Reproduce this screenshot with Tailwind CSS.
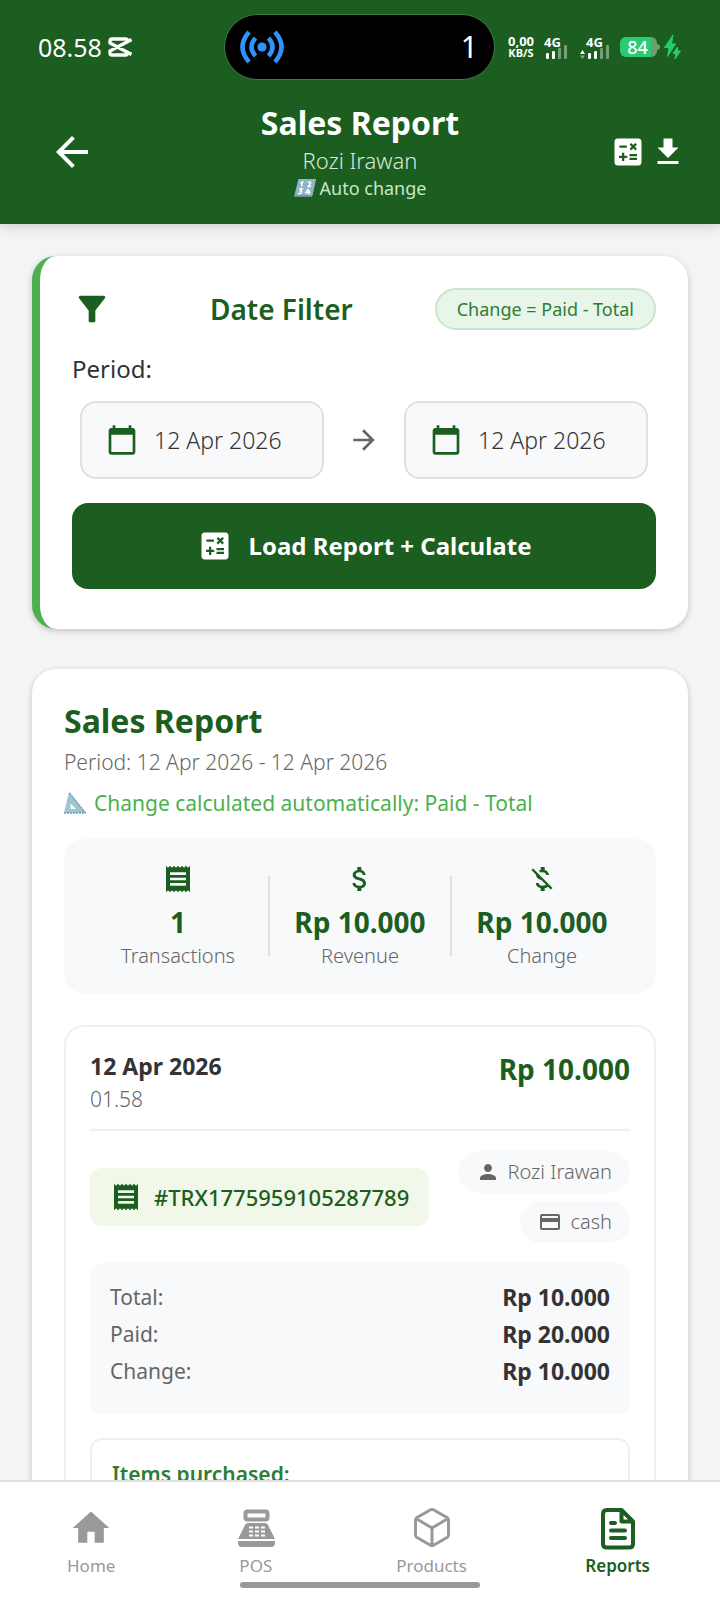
<!DOCTYPE html>
<html lang="en">
<head>
<meta charset="utf-8">
<meta name="viewport" content="width=device-width, initial-scale=1">
<title>Sales Report</title>
<script src="https://cdn.jsdelivr.net/npm/@tailwindcss/browser@4"></script>
</head>
<body class="flex h-screen flex-col overflow-hidden bg-[#f4f4f4] font-['Noto_Sans',sans-serif] text-[#333333]">

<svg class="hidden" aria-hidden="true">
  <symbol id="calc" viewBox="0 0 24 24"><path fill="currentColor" d="M19 3H5c-1.1 0-2 .9-2 2v14c0 1.1.9 2 2 2h14c1.1 0 2-.9 2-2V5c0-1.1-.9-2-2-2zm-5.97 4.06 1.06-1.06 1.41 1.41L16.91 6l1.06 1.06-1.41 1.41 1.41 1.41-1.06 1.06-1.41-1.41-1.41 1.41-1.06-1.06 1.41-1.41-1.41-1.41zM6.25 7.72h5v1.5h-5v-1.5zM11.5 16h-2v2H8v-2H6v-1.5h2v-2h1.5v2h2V16zm6.5 1.25h-5v-1.5h5v1.5zm0-2.5h-5v-1.5h5v1.5z"/></symbol>
  <symbol id="calendar" viewBox="0 0 24 24"><path fill="currentColor" d="M20 3h-1V1h-2v2H7V1H5v2H4c-1.1 0-2 .9-2 2v16c0 1.1.9 2 2 2h16c1.1 0 2-.9 2-2V5c0-1.1-.9-2-2-2zm0 18H4V8h16v13z"/></symbol>
  <symbol id="receipt" viewBox="0 0 24 24"><path fill="currentColor" d="M18 17H6v-2h12v2zm0-4H6v-2h12v2zm0-4H6V7h12v2zM3 22l1.5-1.5L6 22l1.5-1.5L9 22l1.5-1.5L12 22l1.5-1.5L15 22l1.5-1.5L18 22l1.5-1.5L21 22V2l-1.5 1.5L18 2l-1.5 1.5L15 2l-1.5 1.5L12 2l-1.5 1.5L9 2 7.500 3.5 6 2 4.500 3.5 3 2v20z"/></symbol>
</svg>

<header class="relative z-10 shrink-0 bg-[#1b5e20] text-white shadow-[0_2px_12px_rgba(0,0,0,0.18)]">
  <!-- Status bar -->
  <div class="flex h-[103px] items-start pr-[39px] pl-[38px]">
    <div class="flex h-[94px] flex-1 items-center gap-[6px]">
      <span class="text-[25px] leading-[34px]">08.58</span>
      <svg class="h-5 w-6" viewBox="0 0 24 20" fill="none" stroke="#fff" stroke-width="3.400" stroke-linejoin="round" aria-hidden="true"><path d="M23.500 2.500 2 14v2q0 2 2 2h13.500q2 0 2-2v-.5M23.500 17.500 2 6V4q0-2 2-2h13.500q2 0 2 2v.5"/></svg>
    </div>
    <div class="mt-[14px] flex h-[66px] w-[271px] items-center justify-between rounded-full border border-[#3c7b49] bg-black pr-4 pl-[14px]">
      <svg class="h-9 w-[46px]" viewBox="0 0 46 36" fill="none" stroke="#2f93ff" stroke-width="4.500" aria-hidden="true"><circle cx="23" cy="18" r="4.600" fill="#2f93ff" stroke="none"/><path d="M16.500 9Q8.500 18 16.500 27M29.500 9q8 9 0 18M10 3Q-3 18 10 33M36 3q13 15 0 30"/></svg>
      <span class="text-[30px] leading-10 font-normal">1</span>
    </div>
    <div class="flex h-[94px] flex-1 items-center justify-end">
      <div class="mr-[10px] text-center font-bold">
        <div class="text-[13px] leading-3">0,00</div>
        <div class="text-[11px] leading-3">KB/S</div>
      </div>
      <div class="mr-[12px] flex flex-col">
        <span class="text-[13px] leading-[12px] font-bold">4G</span>
        <svg class="-mt-[3px] ml-[2px] h-[14px] w-[22px]" viewBox="0 0 22 14" fill="#fff" aria-hidden="true"><rect y="8" width="3" height="6" rx="1"/><rect x="6" y="6" width="3" height="8" rx="1"/><g opacity=".4"><rect x="12" y="3" width="3" height="11" rx="1"/><rect x="18" width="3" height="14" rx="1"/></g></svg>
      </div>
      <div class="mr-[10px] flex flex-col">
        <span class="ml-[6px] text-[13px] leading-[12px] font-bold">4G</span>
        <svg class="-mt-[3px] h-[14px] w-[30px]" viewBox="0 0 30 14" fill="#fff" aria-hidden="true"><path d="M0 9h5L2.500 5z"/><path d="M0 10.500h5L2.500 14z" opacity=".5"/><rect x="8" y="8" width="3" height="6" rx="1"/><rect x="14" y="6" width="3" height="8" rx="1"/><g opacity=".4"><rect x="20" y="3" width="3" height="11" rx="1"/><rect x="26" width="3" height="14" rx="1"/></g></svg>
      </div>
      <div class="flex h-5 w-[37px] items-center justify-center rounded-[6px] bg-linear-to-r from-[#2acb72] from-84% to-[#6f9c72] to-84% pr-[2px] text-[18px] leading-5 font-medium">84</div>
      <div class="mr-1 h-[6px] w-[3px] rounded-r-full bg-[#6f9c72]"></div>
      <svg class="h-[26px] w-[17px]" viewBox="0 0 17 26" fill="#26cb70" stroke="#26cb70" stroke-linejoin="round" aria-hidden="true"><path d="M9 1 .5 13.500H5L3.500 22.500 11.500 10H7.500z"/><path d="M13.500 13 9 19.500h3l-1 5.500 5.500-8h-3z"/></svg>
    </div>
  </div>
  <!-- App bar -->
  <div class="grid grid-cols-[1fr_auto_1fr] items-center pr-[34px] pb-[23px] pl-12">
    <button type="button" aria-label="Back" class="size-12 cursor-pointer">
      <svg class="size-12" viewBox="0 0 24 24" fill="currentColor"><path d="M20 11H7.830l5.590-5.590L12 4l-8 8 8 8 1.410-1.410L7.830 13H20v-2z"/></svg>
    </button>
    <div class="-ml-[14px] flex flex-col items-center">
      <h1 class="text-[32px] leading-10 font-bold">Sales Report</h1>
      <p class="mt-[2px] text-[22px] leading-[30px] font-light text-[#d9e6da]">Rozi Irawan</p>
      <p class="flex items-center gap-1 text-[18px] leading-[26px] text-[#c8e6c9]">
        <svg class="h-[18px] w-[22px]" viewBox="0 0 22 18" aria-hidden="true"><path d="M4.500 0H22l-4 18H0z" fill="#5d8da5"/><path d="M4.500 0H22l-3.500 16.500H.5z" fill="#8fb4c6"/><path d="M6.500 4 8.500 3 7.500 7.500M14 3.500q3-1 2.500 1t-3 3h3.500M5 10h3l-1.500 2q2 .5 0 2.500H4M14.500 10 12 13.500h4.500M15.500 11l-1 4.500" fill="none" stroke="#fff" stroke-width="1.500"/></svg>
        Auto change
      </p>
    </div>
    <div class="flex justify-end gap-1">
      <button type="button" aria-label="Calculate" class="cursor-pointer"><svg class="size-9"><use href="#calc"/></svg></button>
      <button type="button" aria-label="Download" class="cursor-pointer"><svg class="size-9" viewBox="0 0 24 24" fill="currentColor"><path d="M19 9h-4V3H9v6H5l7 7 7-7zM5 18v2h14v-2H5z"/></svg></button>
    </div>
  </div>
</header>

<main class="flex min-h-0 flex-1 flex-col gap-10 overflow-y-auto px-8 pt-8 pb-10 [scrollbar-width:none]">
  <section class="shrink-0 rounded-3xl border-l-8 border-[#4caf50] bg-white px-8 pt-8 pb-10 shadow-[0_2px_6px_rgba(0,0,0,0.2)]">
    <div class="flex items-center justify-between text-[#1b5e20]">
      <svg class="size-10" viewBox="0 0 24 24" fill="currentColor" aria-hidden="true"><path d="M4.250 5.610C6.270 8.200 10 13 10 13v6c0 .55.45 1 1 1h2c.55 0 1-.45 1-1v-6s3.720-4.800 5.740-7.390A.998.998 0 0 0 18.950 4H5.040c-.83 0-1.300.95-.79 1.610z"/></svg>
      <h2 class="ml-4 text-[28px] leading-9 font-semibold">Date Filter</h2>
      <span class="rounded-full border-2 border-[#c8e6c9] bg-[#e8f5e9] px-5 py-[6px] text-[18px] leading-[26px] text-[#2e7d32]">Change = Paid - Total</span>
    </div>
    <p class="mt-[23px] text-[24px] leading-8">Period:</p>
    <div class="mx-2 mt-4 flex items-center">
      <button type="button" class="flex flex-1 cursor-pointer items-center gap-4 rounded-2xl border-2 border-[#e0e0e0] bg-[#f8f9fb] px-6 py-5 text-[23px] leading-[34px] font-light">
        <svg class="size-8 text-[#1b5e20]" aria-hidden="true"><use href="#calendar"/></svg>12 Apr 2026
      </button>
      <svg class="mx-6 size-8 text-[#666666]" viewBox="0 0 24 24" fill="currentColor" aria-hidden="true"><path d="m12 4-1.410 1.410L16.170 11H4v2h12.170l-5.580 5.590L12 20l8-8z"/></svg>
      <button type="button" class="flex flex-1 cursor-pointer items-center gap-4 rounded-2xl border-2 border-[#e0e0e0] bg-[#f8f9fb] px-6 py-5 text-[23px] leading-[34px] font-light">
        <svg class="size-8 text-[#1b5e20]" aria-hidden="true"><use href="#calendar"/></svg>12 Apr 2026
      </button>
    </div>
    <button type="button" class="mt-6 flex w-full cursor-pointer items-center justify-center gap-4 rounded-2xl bg-[#1b5e20] py-[25px] text-[24px] leading-9 font-bold text-white">
      <svg class="size-9" aria-hidden="true"><use href="#calc"/></svg>Load Report + Calculate
    </button>
  </section>

  <section class="shrink-0 rounded-3xl bg-white p-8 shadow-[0_2px_6px_rgba(0,0,0,0.2)]">
    <h2 class="text-[32px] leading-10 font-bold text-[#1b5e20]">Sales Report</h2>
    <p class="mt-[6px] text-[21px] leading-[30px] font-light text-[#666666]">Period: 12 Apr 2026 - 12 Apr 2026</p>
    <p class="mt-3 flex items-center gap-2 text-[21px] leading-7 text-[#4caf50]">
      <svg class="h-[22px] w-[22px]" viewBox="0 0 22 22" aria-hidden="true"><path fill="#9cc7d0" fill-rule="evenodd" d="M5 0 22 21H0zm1.500 11.500V17H12z"/><path d="M5.500 1 21 20.500M0 21h22" stroke="#6d9cab" stroke-width="1.500" stroke-dasharray="2 1"/></svg>
      Change calculated automatically: Paid - Total
    </p>

    <div class="mt-[22px] flex items-center rounded-[20px] bg-[#f8f9fb] px-6 py-6">
      <div class="flex flex-1 flex-col items-center">
        <svg class="size-8 text-[#1b5e20]" aria-hidden="true"><use href="#receipt"/></svg>
        <strong class="mt-[9px] text-[28px] leading-9 font-bold text-[#1b5e20]">1</strong>
        <span class="mt-[3px] text-[20px] leading-[26px] font-light text-[#666666]">Transactions</span>
      </div>
      <div class="h-20 w-[2px] bg-[#e0e0e0]"></div>
      <div class="flex flex-1 flex-col items-center">
        <svg class="size-8 text-[#1b5e20]" viewBox="0 0 24 24" fill="currentColor" aria-hidden="true"><path d="M11.800 10.900c-2.270-.59-3-1.200-3-2.150 0-1.090 1.010-1.850 2.700-1.850 1.780 0 2.440.85 2.500 2.100h2.210c-.07-1.720-1.120-3.300-3.210-3.810V3h-3v2.160c-1.940.42-3.500 1.680-3.500 3.610 0 2.310 1.910 3.460 4.700 4.130 2.500.6 3 1.480 3 2.410 0 .69-.49 1.790-2.700 1.790-2.060 0-2.870-.92-2.980-2.100h-2.200c.12 2.190 1.760 3.420 3.680 3.830V21h3v-2.150c1.950-.37 3.500-1.500 3.500-3.550 0-2.840-2.430-3.810-4.700-4.400z"/></svg>
        <strong class="mt-[9px] text-[28px] leading-9 font-bold text-[#1b5e20]">Rp 10.000</strong>
        <span class="mt-[3px] text-[20px] leading-[26px] font-light text-[#666666]">Revenue</span>
      </div>
      <div class="h-20 w-[2px] bg-[#e0e0e0]"></div>
      <div class="flex flex-1 flex-col items-center">
        <svg class="size-8 text-[#1b5e20]" viewBox="0 0 24 24" fill="currentColor" aria-hidden="true"><path d="M12.500 6.900c1.780 0 2.440.85 2.500 2.100h2.210c-.07-1.720-1.120-3.300-3.210-3.810V3h-3v2.160c-.53.12-1.030.3-1.480.54l1.470 1.470c.41-.17.910-.27 1.510-.27zM5.330 4.060 4.060 5.330 7.500 8.770c0 2.080 1.560 3.210 3.910 3.910l3.510 3.510c-.34.48-1.050.91-2.420.91-2.060 0-2.870-.92-2.980-2.100h-2.200c.12 2.190 1.760 3.420 3.680 3.830V21h3v-2.150c.96-.18 1.820-.55 2.450-1.120l2.220 2.220 1.270-1.270L5.330 4.060z"/></svg>
        <strong class="mt-[9px] text-[28px] leading-9 font-bold text-[#1b5e20]">Rp 10.000</strong>
        <span class="mt-[3px] text-[20px] leading-[26px] font-light text-[#666666]">Change</span>
      </div>
    </div>

    <article class="mt-8 rounded-[20px] border-2 border-[#e8f5e9] p-6">
      <div class="flex items-start justify-between border-b-2 border-[#f0f0f0] pb-4">
        <div>
          <h3 class="text-[23px] leading-[30px] font-bold">12 Apr 2026</h3>
          <p class="mt-1 text-[21px] leading-7 font-light text-[#666666]">01.58</p>
        </div>
        <strong class="text-[28px] leading-9 font-bold text-[#1b5e20]">Rp 10.000</strong>
      </div>
      <div class="mt-5 flex items-center justify-between">
        <div class="flex items-center gap-3 rounded-xl bg-[#f1f8e9] px-5 py-[13px] text-[22px] leading-8 font-medium text-[#1b5e20]">
          <svg class="size-8" aria-hidden="true"><use href="#receipt"/></svg>#TRX1775959105287789
        </div>
        <div class="flex flex-col items-end gap-2 text-[20px] leading-[26px] font-light text-[#666666]">
          <span class="flex items-center gap-2 rounded-full bg-[#f8f9fb] px-[18px] py-2">
            <svg class="size-6" viewBox="0 0 24 24" fill="currentColor" aria-hidden="true"><path d="M12 12c2.210 0 4-1.790 4-4s-1.790-4-4-4-4 1.790-4 4 1.790 4 4 4zm0 2c-2.670 0-8 1.340-8 4v2h16v-2c0-2.660-5.330-4-8-4z"/></svg>Rozi Irawan
          </span>
          <span class="flex items-center gap-2 rounded-full bg-[#f8f9fb] px-[18px] py-2">
            <svg class="size-6" viewBox="0 0 24 24" fill="currentColor" aria-hidden="true"><path d="M20 4H4c-1.110 0-1.990.89-1.990 2L2 18c0 1.110.89 2 2 2h16c1.110 0 2-.89 2-2V6c0-1.110-.89-2-2-2zm0 14H4v-6h16v6zm0-10H4V6h16v2z"/></svg>cash
          </span>
        </div>
      </div>
      <dl class="mt-5 rounded-xl bg-[#f8f9fb] p-5 text-[21px] leading-[29px]">
        <div class="mb-2 flex items-center justify-between"><dt class="text-[#666666]">Total:</dt><dd class="text-[23px] font-bold">Rp 10.000</dd></div>
        <div class="mb-2 flex items-center justify-between"><dt class="text-[#666666]">Paid:</dt><dd class="text-[23px] font-bold">Rp 20.000</dd></div>
        <div class="mb-2 flex items-center justify-between"><dt class="text-[#666666]">Change:</dt><dd class="text-[23px] font-bold">Rp 10.000</dd></div>
      </dl>
      <div class="mt-6 rounded-xl border-2 border-[#e8f5e9] p-5">
        <h4 class="text-[21px] leading-7 font-semibold text-[#2e7d32]">Items purchased:</h4>
      </div>
    </article>
  </section>
</main>

<nav class="relative z-10 flex shrink-0 justify-between border-t-2 border-[#e0e0e0] bg-white pt-6 pr-[70px] pb-[22px] pl-[67px] text-[17px] leading-6 text-[#999999]">
  <a href="#home" class="flex flex-col items-center gap-1">
    <svg class="size-11" viewBox="0 0 24 24" fill="currentColor" aria-hidden="true"><path d="M10 20v-6h4v6h5v-8h3L12 3 2 12h3v8z"/></svg>Home
  </a>
  <a href="#pos" class="flex flex-col items-center gap-1">
    <svg class="size-11" viewBox="0 0 44 44" aria-hidden="true"><rect x="11.500" y="5.500" width="22" height="8" rx="2" fill="none" stroke="currentColor" stroke-width="4"/><path fill="currentColor" d="M14 17h17q2 0 3 2l7 14H4l7-14q1-2 3-2zM4 35h37v2q0 4-4 4H8q-4 0-4-4z"/><path stroke="#fff" stroke-width="2" stroke-dasharray="4 2" d="M15 21.500h16M15 25.500h16M15 29.500h16"/></svg>POS
  </a>
  <a href="#products" class="flex flex-col items-center gap-1">
    <svg class="size-11" viewBox="0 0 44 44" fill="none" stroke="currentColor" stroke-width="3" stroke-linejoin="round" aria-hidden="true"><path d="M20.500 3.800q1.500-.8 3 0l13.500 7.700q1.500 1 1.500 2.500v15q0 1.500-1.500 2.500l-13.500 7.800q-1.500.8-3 0L7 31.500Q5.500 30.500 5.500 29V14q0-1.500 1.500-2.500zM6 12.500l16 9.500 16-9.500M22 22v17.500"/></svg>Products
  </a>
  <a href="#reports" aria-current="page" class="flex flex-col items-center gap-1 font-semibold text-[#1b5e20]">
    <svg class="size-11" viewBox="0 0 44 44" fill="none" stroke="currentColor" stroke-width="4" stroke-linecap="round" stroke-linejoin="round" aria-hidden="true"><path d="M25.500 4H11q-4 0-4 4v30q0 3.500 4 3.500h22q4 0 4-3.500V15.500zM25.500 4v11.500H37M15 17h4M15 24.500h14M15 32h14"/></svg>Reports
  </a>
  <!-- Gesture bar -->
  <div class="absolute bottom-3 left-1/2 h-[6px] w-60 -translate-x-1/2 rounded-full bg-[#999999]"></div>
</nav>
</body>
</html>
